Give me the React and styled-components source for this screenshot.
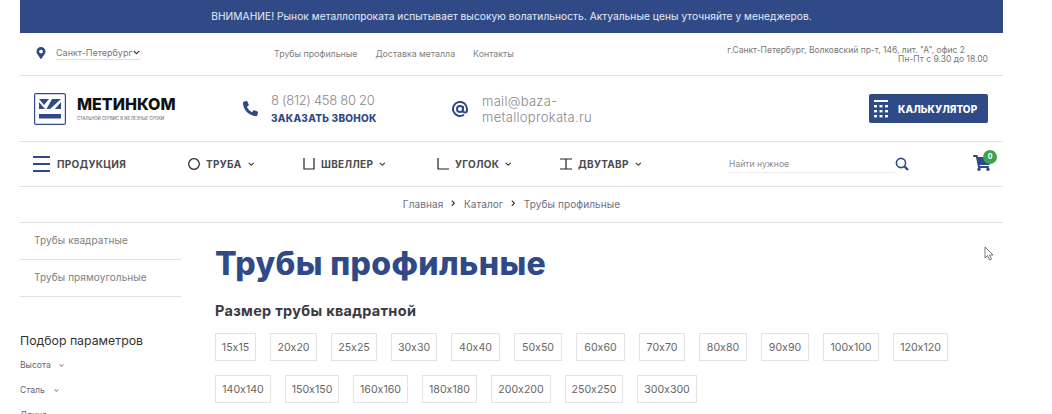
import React from 'react';
import styled, { createGlobalStyle } from 'styled-components';
import { FaMapMarkerAlt, FaPhoneAlt, FaShoppingCart, FaChevronDown, FaChevronRight } from 'react-icons/fa';

const navy = '#2f4a87';
const line = '#e2e2e4';

const Global = createGlobalStyle`
  html, body { margin: 0; padding: 0; background: #fff; overflow: hidden; height: 414px; }
  body { font-family: Inter, "Noto Sans", sans-serif; color: #555; font-feature-settings: "calt" 0; }
`;
const Page = styled.div`
  width: 983px;
  margin-left: 20px;
  position: relative;
`;
const Banner = styled.div`
  height: 33px;
  background: ${navy};
  color: #e8ecf5;
  font-size: 10.2px;
  line-height: 32px;
  text-align: center;
  letter-spacing: 0.04px;
`;
const TopRow = styled.div`
  height: 43px;
  box-sizing: border-box;
  border-bottom: 1px solid ${line};
  display: grid;
  grid-template-columns: 234px 1fr auto;
  align-items: center;
  padding: 0 15px 2px;
`;
const City = styled.div`
  display: flex;
  align-items: center;
  gap: 9px;
  color: ${navy};
`;
const CityName = styled.span`
  display: inline-flex;
  align-items: center;
  gap: 1px;
  font-size: 9px;
  color: #777;
  border-bottom: 1px solid #ddd;
  line-height: 12px;
  & > svg { color: #222; }
`;
const TopLinks = styled.nav`
  display: flex;
  gap: 18px;
  padding-left: 5px;
`;
const TopLink = styled.span`
  font-size: 8.8px;
  color: #808080;
`;
const Address = styled.div`
  font-size: 8.5px;
  line-height: 9px;
  color: #777;
  text-align: right;
  margin-top: 4px;
`;
const AddressLine = styled.div`
  padding-right: ${p => p.$inset || 0}px;
`;
const MainRow = styled.div`
  height: 66px;
  box-sizing: border-box;
  border-bottom: 1px solid ${line};
  display: grid;
  grid-template-columns: 209px 209px 1fr auto;
  align-items: center;
  padding: 0 15px 0 14px;
`;
const Logo = styled.div`
  display: flex;
  align-items: center;
  gap: 11px;
`;
const LogoText = styled.div`
  display: flex;
  flex-direction: column;
  gap: 3px;
`;
const LogoName = styled.div`
  font-size: 16px;
  line-height: 17px;
  font-weight: 800;
  color: #111;
`;
const LogoTag = styled.div`
  font-size: 4.2px;
  line-height: 5px;
  color: #555;
`;
const Contact = styled.div`
  display: flex;
  align-items: center;
  gap: ${p => p.$gap}px;
  color: ${navy};
`;
const ContactText = styled.div`
  font-size: 13px;
  font-weight: 300;
  line-height: 16px;
  color: #888;
  width: ${p => p.$w}px;
  letter-spacing: ${p => p.$ls}px;
`;
const CallBack = styled.div`
  font-size: 10px;
  font-weight: 800;
  color: ${navy};
  margin-top: 2px;
  letter-spacing: 0.25px;
`;
const CalcButton = styled.div`
  width: 119px;
  height: 29px;
  background: ${navy};
  border-radius: 2px;
  display: flex;
  align-items: center;
  gap: 9px;
  padding-left: 4px;
  box-sizing: border-box;
  color: #fff;
  font-size: 10px;
  font-weight: 800;
  letter-spacing: 0.05px;
`;
const NavRow = styled.div`
  height: 45px;
  box-sizing: border-box;
  border-bottom: 1px solid ${line};
  display: grid;
  grid-template-columns: 155px 115px 134px 123px 169px 244px 1fr;
  align-items: center;
  padding-left: 13px;
`;
const NavItem = styled.div`
  display: flex;
  align-items: center;
  gap: 6px;
  font-size: 10px;
  font-weight: 700;
  color: #4a4a4f;
  letter-spacing: 0.3px;
`;
const Burger = styled.div`
  width: 17px;
  display: flex;
  flex-direction: column;
  gap: 5px;
  margin-right: 1px;
`;
const BurgerBar = styled.div`
  height: 2px;
  background: ${navy};
`;
const Chevron = styled(FaChevronDown)`
  font-size: 6.5px;
  color: #333;
`;
const Search = styled.div`
  display: flex;
  align-items: center;
  width: 180px;
  color: ${navy};
`;
const SearchField = styled.div`
  flex: 1;
  font-size: 8.6px;
  color: #8a8a90;
  border-bottom: 1px solid #eee;
  line-height: 14px;
  padding-bottom: 1px;
  margin-top: 2px;
`;
const Cart = styled.div`
  position: relative;
  width: 20px;
  height: 17px;
  margin-top: -4px;
  color: ${navy};
`;
const Badge = styled.div`
  position: absolute;
  left: 10px;
  top: -4px;
  width: 14px;
  height: 14px;
  border-radius: 50%;
  background: #3fa24f;
  color: #fff;
  font-size: 7px;
  font-weight: 700;
  line-height: 14px;
  text-align: center;
`;
const Crumbs = styled.div`
  height: 36px;
  box-sizing: border-box;
  border-bottom: 1px solid ${line};
  display: flex;
  align-items: center;
  justify-content: center;
  gap: 6px;
  font-size: 10px;
  padding-bottom: 2px;
  color: #6a7080;
  letter-spacing: 0.1px;
  & > svg { font-size: 6.5px; color: #222; margin: 0 1px; }
`;
const Body = styled.div`
  display: grid;
  grid-template-columns: 161px 1fr;
  column-gap: 34px;
`;
const Side = styled.aside`
  display: flex;
  flex-direction: column;
`;
const SideLink = styled.div`
  height: 37px;
  box-sizing: border-box;
  padding: 10px 0 0 14px;
  font-size: 10px;
  line-height: 14px;
  color: #808080;
  border-bottom: 1px solid ${line};
  letter-spacing: 0.1px;
`;
const FilterTitle = styled.div`
  margin-top: 35px;
  font-size: 12.3px;
  line-height: 18px;
  color: #333;
`;
const FilterItem = styled.div`
  display: flex;
  align-items: center;
  gap: ${p => p.$gap}px;
  font-size: 8.6px;
  line-height: 12px;
  color: #667;
  margin-top: ${p => p.$top}px;
  & > svg { font-size: 5px; color: #777; }
`;
const Content = styled.main``;
const Title = styled.h1`
  margin: 22px 0 0;
  font-size: 32px;
  line-height: 38px;
  font-weight: 800;
  color: ${navy};
  letter-spacing: 0.37px;
`;
const SubTitle = styled.h2`
  margin: 19px 0 0;
  font-size: 14.5px;
  line-height: 18px;
  font-weight: 700;
  color: #3a3a3f;
  letter-spacing: 0.3px;
`;
const Sizes = styled.div`
  margin-top: 13px;
  display: flex;
  flex-wrap: wrap;
  gap: 14px;
  width: 770px;
`;
const Size = styled.div`
  width: ${p => p.$w}px;
  height: 28px;
  box-sizing: border-box;
  border: 1px solid #e3e3e5;
  display: flex;
  align-items: center;
  justify-content: center;
  font-size: 10.6px;
  color: #666;
`;
const Pointer = styled.svg`
  position: absolute;
  left: 964px;
  top: 246px;
`;

const sizes = [
  ['15x15', 41], ['20x20', 47], ['25x25', 46], ['30x30', 46], ['40x40', 49], ['50x50', 48],
  ['60x60', 49], ['70x70', 46], ['80x80', 48], ['90x90', 48], ['100x100', 56], ['120x120', 55],
  ['140x140', 56], ['150x150', 54], ['160x160', 55], ['180x180', 55], ['200x200', 60], ['250x250', 58], ['300x300', 60],
];

const LogoMark = () => (
  <svg width="32" height="32" viewBox="0 0 32 32">
    <rect x="0.6" y="0.6" width="30.8" height="30.800" rx="1.500" fill="none" stroke="#2f4a87" strokeWidth="1.2" />
    <path d="M5 6h10l-5 6zM5 9l6 7H5zM27 6h-9l-5.500 10h3.500zM27 9l-6 7h6z" fill="#2f4a87" />
    <rect x="5" y="21" width="22" height="4.500" fill="#2f4a87" />
  </svg>
);
const CalcIcon = () => (
  <svg width="16" height="20" viewBox="0 0 16 20" fill="#fff">
    <rect x="1" y="1" width="14" height="2" />
    {[6, 11, 16].map(y => [1, 6.5, 12].map(x => <rect key={`${x}-${y}`} x={x} y={y} width="3" height="2.4" />))}
  </svg>
);
const SearchIcon = () => (
  <svg width="14" height="14" viewBox="0 0 14 14" fill="none" stroke="#2f4a87">
    <circle cx="6" cy="6" r="4.6" strokeWidth="1.6" />
    <path d="M9.500 9.500l3.500 3.500" strokeWidth="2.4" />
  </svg>
);
const Profile = ({ d, round }) => (
  <svg width="12" height="12" viewBox="0 0 12 12" fill="none" stroke="#222" strokeWidth="1.2">
    {round ? <circle cx="6" cy="6" r="5.300" /> : <path d={d} />}
  </svg>
);

export default function App() {
  return (
    <Page>
      <Global />
      <Banner>ВНИМАНИЕ! Рынок металлопроката испытывает высокую волатильность. Актуальные цены уточняйте у менеджеров.</Banner>
      <TopRow>
        <City>
          <FaMapMarkerAlt size={12} />
          <CityName>Санкт-Петербург <FaChevronDown size={7} /></CityName>
        </City>
        <TopLinks>
          <TopLink>Трубы профильные</TopLink>
          <TopLink>Доставка металла</TopLink>
          <TopLink>Контакты</TopLink>
        </TopLinks>
        <Address>
          <AddressLine $inset={23}>г.Санкт-Петербург, Волковский пр-т, 146, лит. "А", офис 2</AddressLine>
          <AddressLine>Пн-Пт с 9.30 до 18.00</AddressLine>
        </Address>
      </TopRow>
      <MainRow>
        <Logo>
          <LogoMark />
          <LogoText>
            <LogoName>МЕТИНКОМ</LogoName>
            <LogoTag>СТАЛЬНОЙ СЕРВИС В ЖЕЛЕЗНЫЕ СРОКИ</LogoTag>
          </LogoText>
        </Logo>
        <Contact $gap={13}>
          <FaPhoneAlt size={15} />
          <ContactText $w={130} $ls={-0.3}>
            8 (812) 458 80 20
            <CallBack>ЗАКАЗАТЬ ЗВОНОК</CallBack>
          </ContactText>
        </Contact>
        <Contact $gap={14}>
          <svg width="16" height="16" viewBox="0 0 16 16" fill="none" stroke="#2f4a87" strokeWidth="2">
            <circle cx="8" cy="8" r="3" />
            <path d="M11 5v4.500a2 2 0 0 0 4 0V8a7 7 0 1 0-3 5.700" />
          </svg>
          <ContactText $w={125} $ls={0.3}>mail@baza-<br />metalloprokata.ru</ContactText>
        </Contact>
        <CalcButton><CalcIcon />КАЛЬКУЛЯТОР</CalcButton>
      </MainRow>
      <NavRow>
        <NavItem><Burger><BurgerBar /><BurgerBar /><BurgerBar /></Burger>ПРОДУКЦИЯ</NavItem>
        <NavItem><Profile round />ТРУБА<Chevron /></NavItem>
        <NavItem><Profile d="M1 0v11h10V0" />ШВЕЛЛЕР<Chevron /></NavItem>
        <NavItem><Profile d="M1 0v11h11" />УГОЛОК<Chevron /></NavItem>
        <NavItem><Profile d="M0 1h12M6 1v10M0 11h12" />ДВУТАВР<Chevron /></NavItem>
        <Search><SearchField>Найти нужное</SearchField><SearchIcon /></Search>
        <Cart><FaShoppingCart size={18} /><Badge>0</Badge></Cart>
      </NavRow>
      <Crumbs>
        <span>Главная</span><FaChevronRight />
        <span>Каталог</span><FaChevronRight />
        <span>Трубы профильные</span>
      </Crumbs>
      <Body>
        <Side>
          <SideLink>Трубы квадратные</SideLink>
          <SideLink>Трубы прямоугольные</SideLink>
          <FilterTitle>Подбор параметров</FilterTitle>
          <FilterItem $top={9} $gap={8}>Высота <FaChevronDown /></FilterItem>
          <FilterItem $top={13} $gap={9}>Сталь <FaChevronDown /></FilterItem>
          <FilterItem $top={13} $gap={8}>Длина <FaChevronDown /></FilterItem>
        </Side>
        <Content>
          <Title>Трубы профильные</Title>
          <SubTitle>Размер трубы квадратной</SubTitle>
          <Sizes>
            {sizes.map(([label, w]) => <Size key={label} $w={w}>{label}</Size>)}
          </Sizes>
        </Content>
      </Body>
      <Pointer width="10" height="16" viewBox="0 0 10 16">
        <path d="M1 1v11l2.500-2.500L5.500 14l2-1-2-4H9z" fill="#fff" stroke="#555" strokeWidth="0.8" />
      </Pointer>
    </Page>
  );
}
